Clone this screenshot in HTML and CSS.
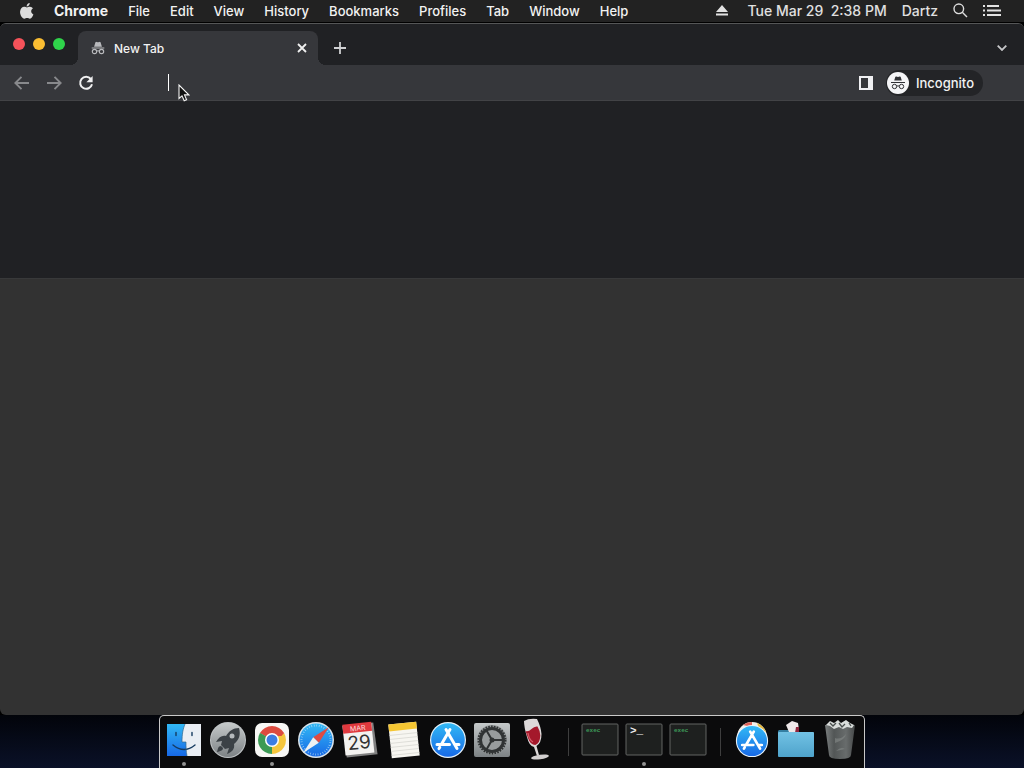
FILE: index.html
```html
<!DOCTYPE html>
<html lang="en">
<head>
  <meta charset="UTF-8">
  <meta name="viewport" content="width=device-width, initial-scale=1.0">
  <title>New Tab</title>
  <link rel="stylesheet" href="styles.css">
</head>
<body>

  <!-- shared shapes -->
  <svg class="defs" width="0" height="0" aria-hidden="true">
    <defs>
      <linearGradient id="blue" x1="0" y1="0" x2="0" y2="1">
        <stop offset="0" stop-color="#32b9f5"/>
        <stop offset="1" stop-color="#1769e6"/>
      </linearGradient>
      <linearGradient id="silver" x1="0" y1="0" x2="0" y2="1">
        <stop offset="0" stop-color="#c5c9ca"/>
        <stop offset="1" stop-color="#7d8285"/>
      </linearGradient>
      <linearGradient id="folder" x1="0" y1="0" x2="0" y2="1">
        <stop offset="0" stop-color="#72c2e4"/>
        <stop offset="1" stop-color="#4ea3cb"/>
      </linearGradient>
      <linearGradient id="bin" x1="0" y1="0" x2="1" y2="0">
        <stop offset="0" stop-color="#7b7f7f"/>
        <stop offset=".3" stop-color="#525656"/>
        <stop offset=".7" stop-color="#686c6c"/>
        <stop offset="1" stop-color="#464949"/>
      </linearGradient>
    </defs>
    <symbol id="incognito" viewBox="0 0 16 16">
      <path d="M3.5 6.6 5 1.7q.3-1 1.3-.7l1.7.5L9.7 1q1-.3 1.3.7l1.5 4.900z" fill="currentColor"/>
      <path d="M.8 8h14.400" stroke="currentColor" stroke-width="1.300"/>
      <g fill="none" stroke="currentColor" stroke-width="1.300">
        <circle cx="4" cy="12" r="2.500"/>
        <circle cx="12" cy="12" r="2.500"/>
        <path d="M6.500 11.600q1.500-1 3 0"/>
      </g>
    </symbol>
    <symbol id="appstore" viewBox="0 0 38 38">
      <circle cx="19" cy="19" r="18" fill="#e8f3fa"/>
      <circle cx="19" cy="19" r="16.800" fill="url(#blue)"/>
      <g stroke="#fff" stroke-width="3" stroke-linecap="round" fill="none">
        <path d="M17 8.500 28 27.500M21 8.500 12.300 23.500M10.800 26.200l-.8 1.400M8 23.500h12.500M26 23.500h4"/>
      </g>
    </symbol>
  </svg>

  <header class="menubar">
    <nav class="menus">
      <button class="apple" aria-label="Apple menu">
        <svg width="14" height="16" viewBox="0 0 14 16"><path fill="#dcdcdc" d="M9.700 0c.1 1.800-1.300 3.500-3.100 3.600C6.400 1.900 8 .2 9.700 0zM7 4.500c.7 0 1.600-.8 3-.7 1.300.1 2.300.6 2.900 1.600-2.500 1.500-2.200 4.900.5 6-.6 1.600-1.900 4.200-3.500 4.300-1.100 0-1.500-.7-2.800-.7s-1.700.7-2.700.7C2 15.600-.2 11.700.1 8.400.4 5.500 2.200 3.800 4.200 3.800c1.100 0 2.100.7 2.800.7z"/></svg>
      </button>
      <button class="app-name">Chrome</button>
      <button>File</button>
      <button>Edit</button>
      <button>View</button>
      <button>History</button>
      <button>Bookmarks</button>
      <button>Profiles</button>
      <button>Tab</button>
      <button>Window</button>
      <button>Help</button>
    </nav>
    <div class="status">
      <button aria-label="Eject">
        <svg width="12" height="11" viewBox="0 0 12 11"><path fill="#e2e2e2" d="M6 0l6 7H0zM0 8.500h12v2H0z"/></svg>
      </button>
      <time class="clock">Tue Mar 29&nbsp; 2:38 PM</time>
      <button class="user">Dartz</button>
      <button aria-label="Search">
        <svg width="15" height="15" viewBox="0 0 15 15" fill="none" stroke="#dedede" stroke-width="1.400"><circle cx="5.800" cy="5.800" r="4.800"/><path d="M9.300 9.300 14 14"/></svg>
      </button>
      <button aria-label="Notifications">
        <svg width="18" height="12" viewBox="0 0 18 12" fill="#e2e2e2"><path d="M0 0h2v2H0zM4 0h12v2H4zM0 4.500h2v2H0zM4 4.500h14v2H4zM0 9h2v2H0zM4 9h14v2H4z"/></svg>
      </button>
    </div>
  </header>

  <main class="window">
    <div class="tabstrip">
      <div class="lights">
        <button class="light close" aria-label="Close"></button>
        <button class="light minimize" aria-label="Minimize"></button>
        <button class="light maximize" aria-label="Zoom"></button>
      </div>
      <div class="tab">
        <svg class="tab-icon" width="14" height="14"><use href="#incognito"/></svg>
        <span class="tab-title">New Tab</span>
        <button aria-label="Close tab">
          <svg width="10" height="10" viewBox="0 0 10 10" stroke="#f1f1f1" stroke-width="1.800"><path d="M1 1l8 8M9 1 1 9"/></svg>
        </button>
      </div>
      <button class="new-tab" aria-label="New tab">
        <svg width="12" height="12" viewBox="0 0 12 12" stroke="#d0d1d3" stroke-width="1.800"><path d="M6 0v12M0 6h12"/></svg>
      </button>
      <button class="tab-search" aria-label="Search tabs">
        <svg width="10" height="6" viewBox="0 0 10 6" fill="none" stroke="#c6c7c9" stroke-width="1.800"><path d="M.7.7 5 5 9.300.7"/></svg>
      </button>
    </div>

    <div class="toolbar">
      <div class="nav-buttons">
        <button aria-label="Back">
          <svg width="16" height="14" viewBox="0 0 16 14" fill="none" stroke="#88898c" stroke-width="1.900"><path d="M7.500.8 1.300 7l6.200 6.200M1.300 7H15"/></svg>
        </button>
        <button aria-label="Forward">
          <svg width="16" height="14" viewBox="0 0 16 14" fill="none" stroke="#88898c" stroke-width="1.900"><path d="M8.500.8 14.700 7l-6.200 6.200M14.700 7H1"/></svg>
        </button>
        <button aria-label="Reload">
          <svg width="16" height="16" viewBox="0 0 16 16"><path d="M12.800 4A6 6 0 1 0 14 9.300" fill="none" stroke="#f0f0f1" stroke-width="2"/><path d="M14.600 1v6.200H8.400z" fill="#f0f0f1"/></svg>
        </button>
      </div>
      <div class="omnibox">
        <span class="caret"></span>
        <input type="text" aria-label="Address and search bar">
        <svg class="pointer" width="12" height="18" viewBox="0 0 12 18"><path d="M1 1v13.500l3-2.700 2.200 5 2.400-1-2.100-4.900h4.300z" fill="#111" stroke="#f4f4f4" stroke-width="1.100"/></svg>
      </div>
      <button class="side-panel" aria-label="Side panel">
        <svg width="14" height="14" viewBox="0 0 14 14"><path d="M0 0h14v14H0zM2 2v10h7V2z" fill="#f0f0f3" fill-rule="evenodd"/></svg>
      </button>
      <button class="profile">
        <span class="avatar">
          <svg width="16" height="16" viewBox="0 0 16 16">
            <path d="M4.200 5.500 5.300 2q.2-.7 1-.5l1.700.4 1.700-.4q.8-.2 1 .5l1.100 3.500z" fill="currentColor"/>
            <path d="M1 7.500h14" stroke="currentColor"/>
            <g fill="none" stroke="currentColor"><circle cx="4.500" cy="11.500" r="2.200"/><circle cx="11.500" cy="11.500" r="2.200"/><path d="M6.700 11.200q1.300-.8 2.600 0"/></g>
          </svg>
        </span>
        Incognito
      </button>
    </div>

    <div class="page-top"></div>
    <div class="page"></div>
  </main>

  <footer class="desktop">
    <nav class="dock" aria-label="Dock">
      <button class="running" aria-label="Finder">
        <svg viewBox="0 0 38 38">
          <path d="M2 3h34v32H2z" fill="#e9eef4"/>
          <path d="M2 3h18c-2 5-3 10-3 18h4c0 5 0 9 1 14H2z" fill="url(#blue)"/>
          <g fill="none" stroke="#153b60" stroke-width="1.400" stroke-linecap="round"><path d="M11 11.500v3M27 11.500v3M8 24q11 9 22 0"/></g>
          <path d="M20 3c-2 5-3 10-3 18h4c0 5 0 9 1 14" fill="none" stroke="#35698d" stroke-width=".7"/>
        </svg>
      </button>
      <button aria-label="Launchpad">
        <svg viewBox="0 0 38 38">
          <circle cx="19" cy="19" r="18" fill="#bfc3c5"/>
          <circle cx="19" cy="19" r="17" fill="url(#silver)"/>
          <path d="M30 7c-6 0-10 3-13 8-4-1-7 1-10 6l6-1-1 4 4 4 4-1-2 6c5-2 8-5 7-10 5-4 7-9 5-16z" fill="#3b4146"/>
          <circle cx="23" cy="15" r="2.500" fill="#b5babd"/>
          <path d="M12 25c-3 0-3 3-4 6 3-1 6-1 6-4z" fill="#3b4146"/>
        </svg>
      </button>
      <button class="running" aria-label="Chrome">
        <svg viewBox="0 0 38 38">
          <rect x="2" y="2" width="34" height="34" rx="7" fill="#f7f7f5"/>
          <path d="M19 19 6.900 12A14 14 0 0 1 31.100 12z" fill="#dc4b3f"/>
          <path d="M19 19 31.100 12A14 14 0 0 1 19 33z" fill="#f5c63c"/>
          <path d="M19 19 19 33A14 14 0 0 1 6.900 12z" fill="#3c9a55"/>
          <path d="M19 12h12.100L24 20z" fill="#dc4b3f"/>
          <path d="M13 22.500 6.900 12l7 4z" fill="#3c9a55"/>
          <path d="M25 22.500 19 33l6-18h6l-4 8z" fill="#f5c63c"/>
          <circle cx="19" cy="19" r="7" fill="#fff"/>
          <circle cx="19" cy="19" r="5.500" fill="#3c7de2"/>
        </svg>
      </button>
      <button aria-label="Safari">
        <svg viewBox="0 0 38 38">
          <circle cx="19" cy="19" r="18" fill="#dbe4eb"/>
          <circle cx="19" cy="19" r="16.500" fill="url(#blue)"/>
          <circle cx="19" cy="19" r="14.500" fill="none" stroke="#b1ddf6" stroke-width="2" stroke-dasharray=".6 1.930"/>
          <path d="M32 6 21.800 21.800 16.200 16.200z" fill="#df4b43"/>
          <path d="M6 32 16.200 16.200 21.800 21.800z" fill="#eef1f2"/>
        </svg>
      </button>
      <button aria-label="Calendar">
        <svg viewBox="0 0 38 38">
          <g transform="rotate(-6 19 19)">
            <path d="M4 3h30l1 32H4z" fill="#808080"/>
            <path d="M3 3h29v30H3z" fill="#f3f2f0"/>
            <path d="M3 2h29v9H3z" fill="#e0393e"/>
            <text class="cal-month" x="18" y="9.500">MAR</text>
            <text class="cal-day" x="18" y="28">29</text>
          </g>
        </svg>
      </button>
      <button aria-label="Notes">
        <svg viewBox="0 0 38 38">
          <g transform="rotate(-6 19 19)">
            <path d="M5 2h28v34H5z" fill="#f7f6f1"/>
            <path d="M5 2h28v7H5z" fill="#f5c633"/>
            <path d="M5 13h28M5 17h28M5 21h28M5 25h28M5 29h28M5 33h28" stroke="#d5d4cf" stroke-width=".7"/>
          </g>
        </svg>
      </button>
      <button aria-label="App Store"><svg><use href="#appstore"/></svg></button>
      <button aria-label="System Preferences">
        <svg viewBox="0 0 38 38">
          <rect x="1" y="2" width="36" height="34" rx="2" fill="url(#silver)"/>
          <circle cx="19" cy="19" r="15" fill="#939798"/>
          <circle cx="19" cy="19" r="13.500" fill="none" stroke="#303334" stroke-width="2" stroke-dasharray="1.600 1.230"/>
          <circle cx="19" cy="19" r="11.500" fill="#989c9d" stroke="#303334" stroke-width="3"/>
          <path d="M19 19h11M19 19l-5.500-9.500M19 19l-5.500 9.500" stroke="#303334" stroke-width="2"/>
          <circle cx="19" cy="19" r="2.500" fill="#303334"/>
        </svg>
      </button>
      <button aria-label="Wine">
        <svg viewBox="0 0 38 38">
          <path d="M7 0Q12-3 20-2q4 8 4.500 15 0 9-5 12l2.500 9-2 1-3-9q-5-1-7-10Q7 6 7 0z" fill="#ddd9d9"/>
          <path d="M8.500 10q3 1 6-2t6-2.500q3 5 2.800 9-.3 8-5 9.500-5 0-7.300-7z" fill="#a4182b"/>
          <path d="M11 12q1 7 5 9" stroke="#d65b68" stroke-width="1.300" fill="none"/>
          <ellipse cx="23" cy="36" rx="9" ry="2.300" fill="#d2cfcf" transform="rotate(-8 23 36)"/>
        </svg>
      </button>
      <span class="separator"></span>
      <button aria-label="Exec file">
        <svg viewBox="0 0 38 38"><rect x="1" y="3" width="36" height="31" rx="1" fill="#1e201f" stroke="#626463"/><text class="exec" x="5" y="11">exec</text></svg>
      </button>
      <button class="running" aria-label="Terminal">
        <svg viewBox="0 0 38 38"><rect x="1" y="3" width="36" height="31" rx="1" fill="#1e201f" stroke="#626463"/><text class="prompt" x="5" y="13">&gt;_</text></svg>
      </button>
      <button aria-label="Exec file">
        <svg viewBox="0 0 38 38"><rect x="1" y="3" width="36" height="31" rx="1" fill="#1e201f" stroke="#626463"/><text class="exec" x="5" y="11">exec</text></svg>
      </button>
      <span class="separator"></span>
      <button aria-label="Applications">
        <svg viewBox="0 0 38 38">
          <circle cx="19" cy="16" r="15" fill="#f1eee8"/>
          <path d="M10 4a15 15 0 0 1 9-3v5z" fill="#df6258"/>
          <path d="M24 2a15 15 0 0 1 9 9l-6-1z" fill="#e3b83c"/>
          <use href="#appstore" x="2" y="3" width="34" height="34"/>
        </svg>
      </button>
      <button aria-label="Downloads">
        <svg viewBox="0 0 38 38">
          <path d="M2 9h11l2 2h20q2 0 2 2v6H1v-9z" fill="#347fa2"/>
          <path d="M9 4 15 0l6 2 1 7-3 3-7-1z" fill="#eee8e9"/>
          <path d="M19 6h3v6h-4z" fill="#8d253d"/>
          <rect x="1" y="11" width="36" height="25" rx="1" fill="url(#folder)"/>
        </svg>
      </button>
      <button aria-label="Trash">
        <svg viewBox="0 0 38 38">
          <path d="M4 4h30l-4 30q0 4-11 4T8 34z" fill="url(#bin)"/>
          <path d="M5 4l4-4 4 2 4-3 3 3 5-3 4 3 4 2-2 3-5-1-4 2-4-2-5 2-4-3z" fill="#d9dddb"/>
          <path d="M9 2l3 3 3-3M18 2l3 4 3-3M28 2l2 3" fill="none" stroke="#4a504e" stroke-width="1.300"/>
          <path d="M14 17q6 2 11-4-1 6-11 9zM15 30q5-5 9-2" fill="#858a89" opacity=".6"/>
        </svg>
      </button>
    </nav>
  </footer>

</body>
</html>
```
FILE: styles.css
```css
* {
  box-sizing: border-box;
}

body {
  display: flex;
  flex-direction: column;
  height: 100vh;
  margin: 0;
  overflow: hidden;
  background-color: #000;
  color: #f2f2f2;
  font-family: Inter, "Liberation Sans", sans-serif;
  font-size: 13px;
}

button {
  padding: 0;
  border: none;
  background: none;
  color: inherit;
  font: inherit;
}

svg {
  display: block;
}

.defs {
  position: absolute;
}

/* menu bar */
.menubar {
  display: flex;
  justify-content: space-between;
  height: 23px;
  padding: 0 23px 1px 20px;
  border-bottom: 1px solid #000;
  background-color: #222;
  font-weight: 500;
}

.menus,
.status {
  display: flex;
  align-items: center;
}

.menus {
  gap: 20px;
}

.menus .app-name {
  font-size: 14px;
  font-weight: 700;
}

.status {
  gap: 15px;
  color: #e0e0e0;
  font-size: 14px;
}

.clock {
  margin-left: 4px;
}

/* browser window */
.window {
  flex: 1;
  display: flex;
  flex-direction: column;
  overflow: hidden;
  border-top: 1px solid #555657;
  border-radius: 6px;
  background-color: #323232;
}

.tabstrip {
  display: flex;
  align-items: flex-end;
  height: 41px;
  padding-right: 17px;
  background-color: #202124;
}

.lights {
  display: flex;
  gap: 8px;
  width: 78px;
  padding: 0 0 15px 13px;
}

.light {
  width: 12px;
  height: 12px;
  border-radius: 50%;
}

.close {
  background-color: #f5525a;
}

.minimize {
  background-color: #fabd32;
}

.maximize {
  background-color: #2fd44b;
}

.tab {
  position: relative;
  display: flex;
  align-items: center;
  width: 240px;
  height: 34px;
  padding: 0 11px 0 13px;
  border-radius: 8px 8px 0 0;
  background-color: #36373b;
  font-size: 12px;
  font-weight: 500;
}

/* flared feet of the tab */
.tab::before,
.tab::after {
  content: "";
  position: absolute;
  bottom: 0;
  width: 8px;
  height: 8px;
}

.tab::before {
  right: 100%;
  background: radial-gradient(circle at 0 0, transparent 8px, #36373b 8px);
}

.tab::after {
  left: 100%;
  background: radial-gradient(circle at 100% 0, transparent 8px, #36373b 8px);
}

.tab-icon {
  color: #b8b9bc;
}

.tab-title {
  flex: 1;
  margin-left: 9px;
}

.new-tab {
  margin-left: 16px;
  padding-bottom: 11px;
}

.tab-search {
  margin-left: auto;
  padding-bottom: 14px;
}

.toolbar {
  display: flex;
  align-items: center;
  height: 36px;
  padding: 0 41px 0 14px;
  border-bottom: 1px solid #424346;
  background-color: #36373b;
}

.nav-buttons {
  display: flex;
  align-items: center;
  gap: 16px;
}

.omnibox {
  position: relative;
  flex: 1;
  display: flex;
  align-items: center;
  margin-left: 74px;
}

.omnibox input {
  flex: 1;
  min-width: 0;
  border: none;
  outline: none;
  background: none;
  color: #fff;
  font: inherit;
}

.caret {
  width: 1px;
  height: 17px;
  background-color: #fff;
}

.pointer {
  position: absolute;
  top: 10px;
  left: 10px;
}

.side-panel {
  margin-right: 13px;
}

.profile {
  display: flex;
  align-items: center;
  gap: 7px;
  height: 26px;
  padding: 0 9px 0 1px;
  border-radius: 13px;
  background-color: #232427;
  font-weight: 500;
}

.avatar {
  display: grid;
  place-items: center;
  width: 22px;
  height: 22px;
  border-radius: 50%;
  background-color: #f5f5f7;
  color: #303135;
}

.page-top {
  height: 178px;
  border-bottom: 1px solid #38393a;
  background-color: #202124;
}

.page {
  flex: 1;
}

/* dock */
.desktop {
  display: flex;
  justify-content: center;
  height: 53px;
  background: linear-gradient(#02040a, #0a1128);
}

.dock {
  display: flex;
  padding: 0 2px;
  border: 1px solid #c9c9c9;
  border-bottom: none;
  border-radius: 5px 5px 0 0;
  background-color: #0b0b0c;
}

.dock button {
  position: relative;
  display: flex;
  justify-content: center;
  width: 44px;
  padding-top: 5px;
}

.dock svg {
  width: 38px;
  height: 38px;
  overflow: visible;
}

.dock .running::after {
  content: "";
  position: absolute;
  bottom: 2px;
  left: 20px;
  width: 4px;
  height: 4px;
  border-radius: 50%;
  background-color: #929292;
}

.separator {
  width: 1px;
  margin: 12px 9px 12px 10px;
  background-color: #3e3e3e;
}

.cal-month {
  fill: #fbdada;
  font-size: 7px;
  text-anchor: middle;
}

.cal-day {
  fill: #333;
  font-size: 19px;
  text-anchor: middle;
}

.exec {
  fill: #3d9858;
  font: 700 6px "Liberation Mono", monospace;
}

.prompt {
  fill: #eee;
  font: 700 11px "Liberation Mono", monospace;
}
```
